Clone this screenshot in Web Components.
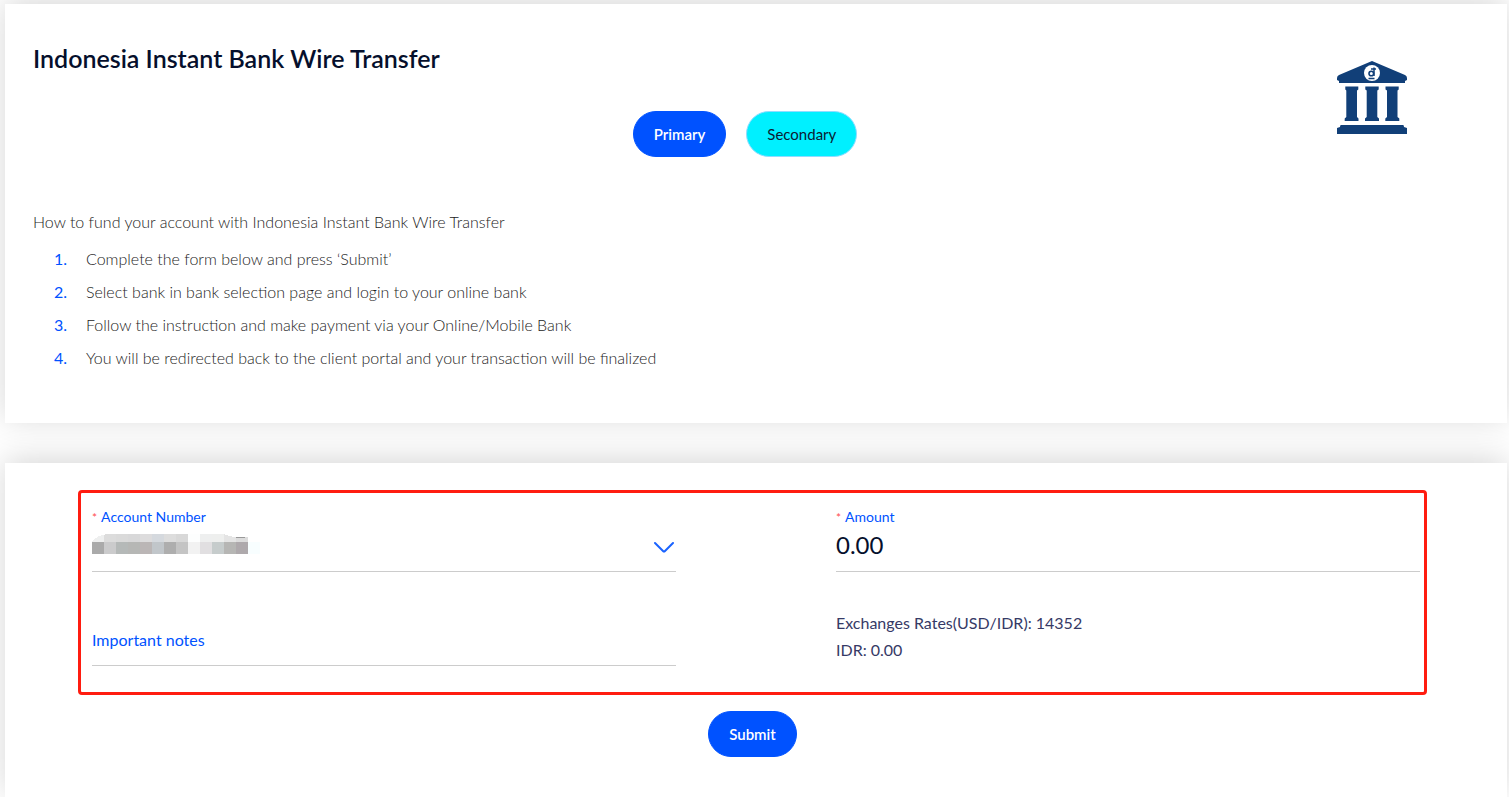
<!DOCTYPE html>
<html lang="en">
<head>
<meta charset="utf-8">
<meta name="viewport" content="width=device-width, initial-scale=1">
<title>Indonesia Instant Bank Wire Transfer</title>
<style>
body { margin: 0; background: #fff; font-family: Lato, "Open Sans", sans-serif; font-size: 16px; color: #1c1c1c; overflow-x: hidden; }
</style>
</head>
<body>
<deposit-page></deposit-page>
<script>
const define = (name, html, setup) => {
  const template = document.createElement('template');
  template.innerHTML = html;
  customElements.define(name, class extends HTMLElement {
    constructor() {
      super();
      this.attachShadow({ mode: 'open' }).append(template.content.cloneNode(true));
    }
    connectedCallback() { if (setup) setup(this, this.shadowRoot); }
  });
};

define('pill-button', `
<style>
:host { display: inline-flex; }
button { height: 46px; padding: 0 20px; border: 1px solid #0052ff; border-radius: 23px; background: #0052ff; color: #fff; font: inherit; font-size: 15px; line-height: 18px; font-weight: 600; cursor: pointer; }
:host([kind="secondary"]) button { background: #00f0ff; border-color: #8fdcff; color: #0b1c33; font-weight: 400; }
</style>
<button type="button"><slot></slot></button>`);

define('bank-icon', `
<style>:host { display: block; width: 70px; height: 74px; } svg { display: block; }</style>
<svg width="70" height="74" viewBox="0 0 70 74" fill="#113f78" role="img" aria-label="Bank">
  <path d="M35 0 68 14Q70 15 70 17V19L68 20V22H2V20L0 19V17Q0 15 2 14Z"/>
  <path d="M8.300 25.500H21.300V28.500L20 29.500V56L21.500 57.500V60H7.700V57.500L9.300 56V29.500L8.300 28.500ZM28.300 25.500H41.700V28.500L40.300 29.500V56L42 57.500V60H28V57.500L29.700 56V29.500L28.300 28.500ZM48.500 25.500H61.700V28.500L60.500 29.500V56L62.300 57.500V60H48.300V57.500L50 56V29.500L48.500 28.500Z"/>
  <path d="M4 64H66Q67 64 67 66L70 67V73H0V67L3 66Q3 64 4 64Z"/>
  <circle cx="35" cy="12" r="8" fill="#fff"/>
  <path d="M37 6.500V15M34 8H39M31.500 17.500H37.500" fill="none" stroke="#113f78" stroke-width="1.500"/>
  <circle cx="34.300" cy="12.500" r="2.300" fill="none" stroke="#113f78" stroke-width="1.600"/>
</svg>`);

define('surface-card', `
<style>
:host { display: block; background: #fff; box-shadow: 0 -4px 30px rgba(0,0,0,.16); }
</style>
<slot></slot>`);

define('funding-steps', `
<style>
:host { display: block; font-weight: 300; }
p { margin: 0; line-height: 24px; }
ol { list-style: none; margin: 8px 0 0; padding: 0 0 0 21px; }
li { display: flex; line-height: 33px; }
li span { flex: 0 0 32px; color: #0052ff; font-weight: 400; }
</style>
<p>How to fund your account with Indonesia Instant Bank Wire Transfer</p>
<ol>
  <li><span>1.</span>Complete the form below and press ‘Submit’</li>
  <li><span>2.</span>Select bank in bank selection page and login to your online bank</li>
  <li><span>3.</span>Follow the instruction and make payment via your Online/Mobile Bank</li>
  <li><span>4.</span>You will be redirected back to the client portal and your transaction will be finalized</li>
</ol>`);

define('transfer-intro', `
<style>
:host { display: block; padding: 34px 28px 49px; }
header { display: grid; grid-template-columns: 1fr auto 1fr; grid-template-rows: 73px 46px; }
h1 { grid-area: 1 / 1 / 2 / 3; margin: 0; font-size: 25px; line-height: 40px; font-weight: 600; color: #050f2c; }
nav { grid-area: 2 / 2; display: flex; gap: 20px; padding-right: 22px; }
bank-icon { grid-area: 1 / 3 / 3 / 4; justify-self: end; margin: 23px 72px 0 0; }
funding-steps { margin-top: 53px; }
</style>
<header>
  <h1>Indonesia Instant Bank Wire Transfer</h1>
  <nav aria-label="Channel"><pill-button>Primary</pill-button><pill-button kind="secondary">Secondary</pill-button></nav>
  <bank-icon></bank-icon>
</header>
<funding-steps></funding-steps>`);

const fieldStyle = `
:host { display: block; min-width: 0; }
label { display: block; font-size: 14px; line-height: 18px; color: #0052ff; }
label i { font-style: normal; color: #ff4d4f; margin-right: 4px; font-size: 12px; }
input, select { display: block; box-sizing: border-box; width: 100%; height: 45px; margin: 0; padding: 0 0 9px; border: 0; border-bottom: 1px solid #ccc; border-radius: 0; background: none; color: #050f2c; font: inherit; font-size: 24px; outline: 0; appearance: none; }`;

define('account-field', `
<style>${fieldStyle}
.control { display: grid; }
.control > * { grid-area: 1 / 1; }
.mask { margin-top: 7px; pointer-events: none; }
.arrow { justify-self: end; margin: 14px 1px 0 0; pointer-events: none; }
</style>
<label for="account"><i>*</i>Account Number</label>
<div class="control">
  <select id="account"><option value=""></option></select>
  <svg class="mask" width="168" height="20" shape-rendering="crispEdges" aria-hidden="true"></svg>
  <svg class="arrow" width="22" height="12" fill="none" stroke="#1a63ff" stroke-width="2" stroke-linecap="round" stroke-linejoin="round" aria-hidden="true"><path d="M2 2 10 10Q11 11 12 10L20 2"/></svg>
</div>`, (host, root) => {
  const top = ['#eeefef','#dcdcdc','#dadada','#d8d8d9','#dddcdd','#d5d9de','#dddddd','#d8d8d8','#fdfefe','#eeefef','#eeefee','#e4e4e4','#dcdcdc'];
  const bottom = ['#aaaaaa','#cbcbcc','#b5b9b8','#b6b7b5','#bbb6b6','#c1c6ca','#aeaeae','#c4c4c4','#f2f2f2','#e1dfe1','#c6cccc','#b6b6b4','#aea9ac','#f8feff'];
  const cells = (colours, y, h) => colours.map((c, i) => `<rect x="${i * 12}" y="${y}" width="12" height="${h}" fill="${c}"/>`).join('');
  root.querySelector('.mask').innerHTML = cells(top, 0, 8) + cells(bottom, 8, 12) +
    '<path d="M0 0H16Q5 1 0 8ZM132 0H156V3H144Q138 3 132 0Z" fill="#fff"/><path d="M144 3H153V4H144Z" fill="#999"/>';
});

define('amount-field', `
<style>${fieldStyle}</style>
<label for="amount"><i>*</i>Amount</label>
<input id="amount" type="text" inputmode="decimal" value="0.00">`);

define('notes-field', `
<style>${fieldStyle}
:host { align-self: end; }
input { height: 40px; padding-bottom: 12px; font-size: 16px; }
input::placeholder { color: #0052ff; opacity: 1; }
</style>
<input type="text" aria-label="Important notes" placeholder="Important notes">`);

define('exchange-rate', `
<style>
:host { display: block; height: 57px; color: #363a66; }
p { margin: 0; line-height: 27px; }
</style>
<p>Exchanges Rates(USD/IDR): 14352</p>
<p>IDR: 0.00</p>`);

define('transfer-form', `
<style>
:host { display: block; padding: 27px 80px 40px 73px; }
.frame { display: grid; grid-template-columns: 1fr 1fr; gap: 37px 160px; padding: 15px 4px 26px 11px; border: 3px solid #ff1c10; border-radius: 4px; }
.actions { display: flex; justify-content: center; margin-top: 16px; }
</style>
<form>
  <div class="frame">
    <account-field></account-field>
    <amount-field></amount-field>
    <notes-field></notes-field>
    <exchange-rate></exchange-rate>
  </div>
  <div class="actions"><pill-button>Submit</pill-button></div>
</form>`);

define('deposit-page', `
<style>
:host { display: flex; flex-direction: column; gap: 40px; padding: 4px 2px 0 5px; }
</style>
<surface-card><transfer-intro></transfer-intro></surface-card>
<surface-card><transfer-form></transfer-form></surface-card>`);
</script>
</body>
</html>
